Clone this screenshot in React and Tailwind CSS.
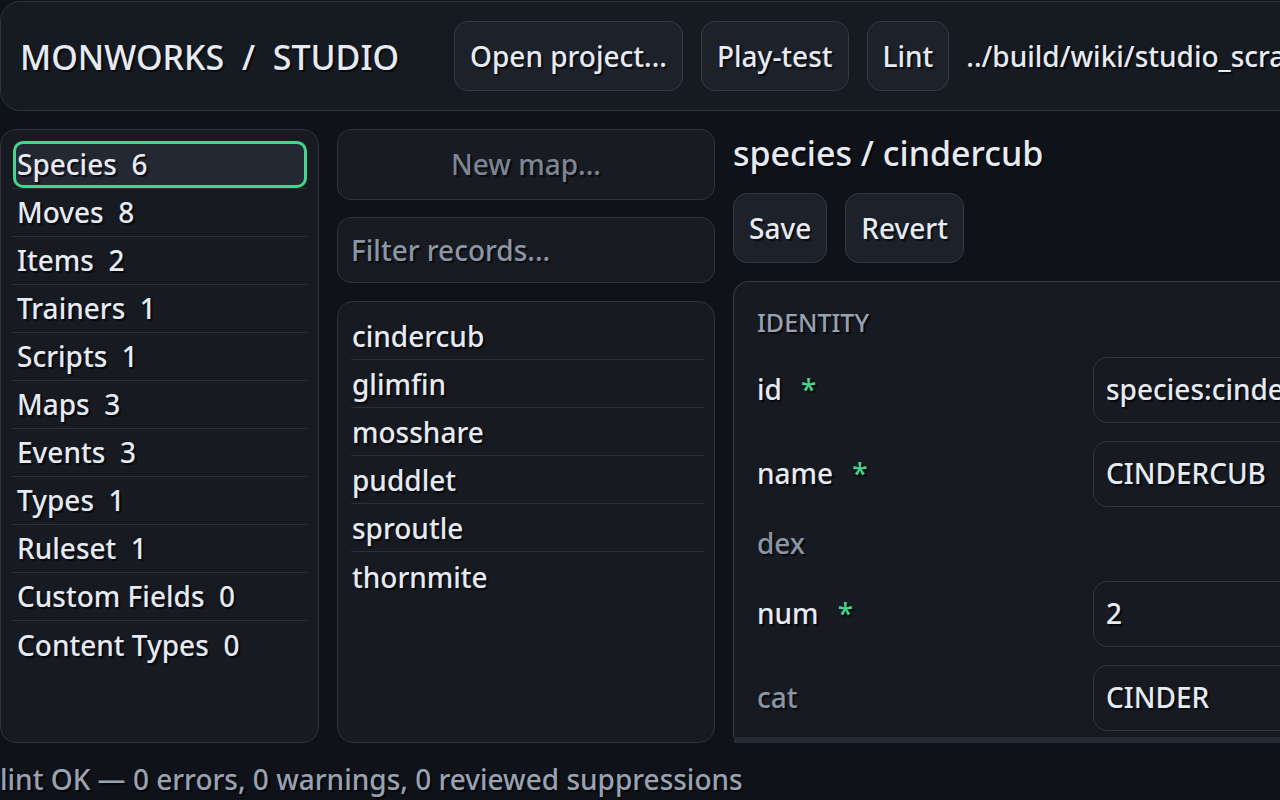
import React from "react";

const categories = [
  ["Species", 6],
  ["Moves", 8],
  ["Items", 2],
  ["Trainers", 1],
  ["Scripts", 1],
  ["Maps", 3],
  ["Events", 3],
  ["Types", 1],
  ["Ruleset", 1],
  ["Custom Fields", 0],
  ["Content Types", 0],
];

const records = ["cindercub", "glimfin", "mosshare", "puddlet", "sproutle", "thornmite"];

function HeaderButton({ children }) {
  return (
    <div className="h-[70px] px-[15px] flex items-center rounded-[14px] border border-[#343944] bg-[#1d2129] text-[28px] leading-none whitespace-nowrap shrink-0 pb-[1px]">
      {children}
    </div>
  );
}

function Req() {
  return <span className="ml-[19px] text-[#44d68c]">*</span>;
}

function Field({ label, required, dim, value, h = "h-[66px]" }) {
  return (
    <div className={`flex items-center ${h} shrink-0`}>
      <div className={`w-[336px] shrink-0 text-[28px] leading-none pb-[2px] ${dim ? "text-[#8c95a4]" : "text-[#e6eaf2]"}`}>
        {label}
        {required && <Req />}
      </div>
      {value !== undefined && (
        <div className="h-full w-[420px] shrink-0 rounded-[14px] border border-[#323742] bg-[#171a21] flex items-center pl-[12px] pb-[2px] text-[28px] leading-none whitespace-nowrap">
          {value}
        </div>
      )}
    </div>
  );
}

export default function App() {
  return (
    <div className="w-[1280px] h-[800px] overflow-hidden bg-[#0f1218] text-[#e6eaf2] font-['Noto_Sans',sans-serif] font-medium [text-shadow:2px_2px_1px_rgba(0,0,0,0.65)] flex flex-col">
      {/* Header */}
      <div className="mt-[1px] h-[110px] w-[1400px] shrink-0 rounded-[20px] border border-[#2e333d] bg-[#161a21] flex items-center pl-[19px]">
        <div className="text-[34px] leading-none whitespace-pre w-[434px] shrink-0 pt-[2px]">MONWORKS  /  STUDIO</div>
        <div className="flex items-center gap-[18px]">
          <HeaderButton>Open project...</HeaderButton>
          <HeaderButton>Play-test</HeaderButton>
          <HeaderButton>Lint</HeaderButton>
          <div className="text-[28px] leading-none whitespace-nowrap ml-[-1px] pb-[1px]">../build/wiki/studio_scratch</div>
        </div>
      </div>

      {/* Main */}
      <div className="mt-[18px] h-[614px] shrink-0 flex gap-[18px]">
        {/* Categories */}
        <div className="w-[319px] shrink-0 h-full rounded-[16px] border border-[#2e333d] bg-[#171a21] p-[11px]">
          {categories.map(([name, n], i) => (
            <div key={name} className={`h-[48px] ${i < categories.length - 1 ? "border-b border-[#2b2f38]" : ""}`}>
              {i === 0 ? (
                <div className="h-full ml-[1px] rounded-[10px] border-[3px] border-[#44d68c] bg-[#242833] flex items-center pl-[1px] pb-[1px] text-[28px] leading-none whitespace-pre">
                  {name}  {n}
                </div>
              ) : (
                <div className="h-full flex items-center pl-[5px] pb-[1px] text-[28px] leading-none whitespace-pre">
                  {name}  {n}
                </div>
              )}
            </div>
          ))}
        </div>

        {/* Records */}
        <div className="w-[378px] shrink-0 h-full flex flex-col">
          <div className="h-[71px] shrink-0 rounded-[14px] border border-[#2e333d] bg-[#181b22] flex items-center justify-center pb-[2px] text-[28px] leading-none text-[#7d8594]">
            New map...
          </div>
          <div className="mt-[17px] h-[66px] shrink-0 rounded-[14px] border border-[#2e333d] bg-[#181b22] flex items-center pl-[13px] pb-[1px] text-[28px] leading-none text-[#8c95a4]">
            Filter records...
          </div>
          <div className="mt-[18px] flex-1 rounded-[16px] border border-[#2e333d] bg-[#171a21] pt-[10px] pl-[13px] pr-[10px]">
            {records.map((r, i) => (
              <div
                key={r}
                className={`h-[48px] flex items-center pl-[1px] pt-[1px] text-[28px] leading-none ${i < records.length - 1 ? "border-b border-[#2b2f38]" : ""}`}
              >
                {r}
              </div>
            ))}
          </div>
        </div>

        {/* Editor */}
        <div className="w-[700px] shrink-0 h-full flex flex-col">
          <div className="h-[48px] shrink-0 flex items-center text-[34px] leading-none">species / cindercub</div>
          <div className="mt-[16px] flex gap-[18px] shrink-0">
            <HeaderButton>Save</HeaderButton>
            <HeaderButton>Revert</HeaderButton>
          </div>
          <div className="mt-[18px] flex-1 min-h-0 overflow-hidden rounded-t-[16px] border-l border-t border-[#363b46] bg-[#171a21] pl-[23px] pt-[22px] flex flex-col">
            <div className="h-[36px] shrink-0 flex items-center text-[25px] leading-none text-[#98a1b0]">IDENTITY</div>
            <div className="mt-[17px] flex flex-col gap-[18px]">
              <Field label="id" required value="species:cindercub" />
              <Field label="name" required value="CINDERCUB" />
              <Field label="dex" dim h="h-[38px]" />
              <Field label="num" required value="2" />
              <Field label="cat" dim value="CINDER" />
            </div>
          </div>
          <div className="h-[6px] shrink-0 bg-[#272b34] ml-[1px]" />
        </div>
      </div>

      {/* Footer */}
      <div className="mt-[22px] text-[28px] leading-[29px] text-[#9aa2b1] whitespace-nowrap">
        lint OK — 0 errors, 0 warnings, 0 reviewed suppressions
      </div>
    </div>
  );
}
